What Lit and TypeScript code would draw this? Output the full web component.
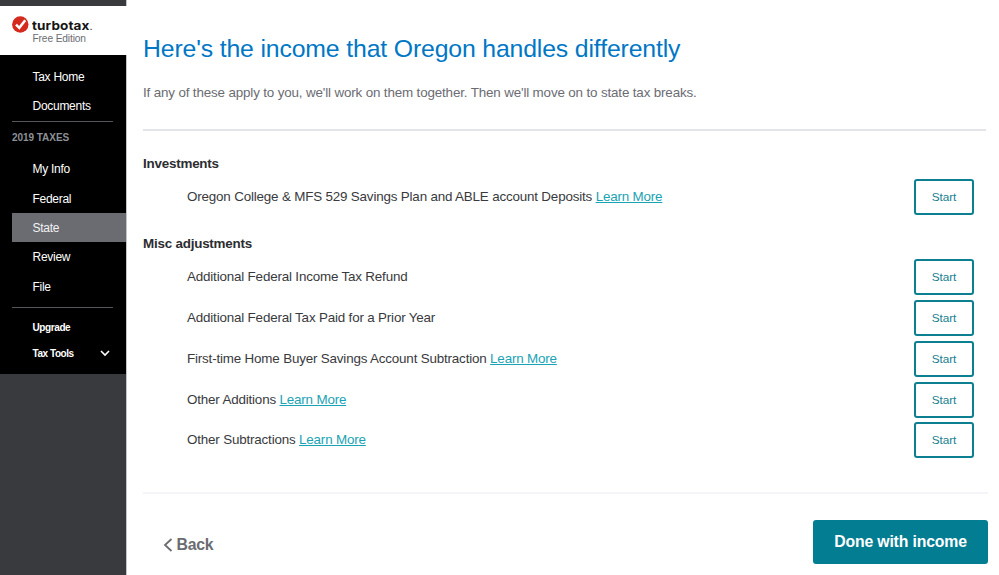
import { LitElement, html, css, nothing } from "lit";
import { customElement } from "lit/decorators.js";

interface Item { label: string; more?: boolean }
interface Section { title: string; items: Item[] }

const SECTIONS: Section[] = [
  {
    title: "Investments",
    items: [{ label: "Oregon College & MFS 529 Savings Plan and ABLE account Deposits", more: true }],
  },
  {
    title: "Misc adjustments",
    items: [
      { label: "Additional Federal Income Tax Refund" },
      { label: "Additional Federal Tax Paid for a Prior Year" },
      { label: "First-time Home Buyer Savings Account Subtraction", more: true },
      { label: "Other Additions", more: true },
      { label: "Other Subtractions", more: true },
    ],
  },
];

@customElement("tax-sidebar")
class TaxSidebar extends LitElement {
  static styles = css`
    :host { display: block; width: 126px; flex: none; background: #393a3d; border-right: 1px solid #c4c4c6; margin-right: -1px; box-sizing: content-box; }
    .brand { box-sizing: border-box; height: 49px; margin-top: 6px; padding: 9px 0 0 12px; background: #fff; display: flex; margin-right: -1px; }
    .brand svg { flex: none; width: 17px; height: 17px; margin-top: 1px; }
    .words { margin-left: 2.5px; }
    .name { font: 700 12.4px/16px Inter, sans-serif; letter-spacing: 0.1px; transform: scaleX(1.09); transform-origin: left; color: #151515; height: 17px; margin-top: 3px; display: flex; }
    .name span { font-weight: 400; font-size: 10px; }
    .edition { font-size: 10.2px; letter-spacing: -0.13px; line-height: 12px; color: #6b6c72; margin: -2px 0 0 1px; }
    .menu { background: #000; height: 319px; box-sizing: border-box; padding-top: 7px; color: #fff; }
    .link { height: 29.35px; line-height: 30.8px; padding-left: 20.5px; margin-left: 12px; font-size: 12px; letter-spacing: -0.28px; }
    .active { background: #6b6c72; color: #f2f2f2; }
    .rule { height: 1px; width: 101px; margin-left: 12px; background: #55565a; }
    .heading { margin: 9px 0 10.5px 12px; font-size: 10px; line-height: 13px; font-weight: 700; color: #8d9096; letter-spacing: -0.05px; }
    .small { display: flex; align-items: center; justify-content: space-between; height: 26px; padding: 0 16px 0 32.5px; font-size: 10px; font-weight: 700; letter-spacing: -0.45px; }
    .second { margin-top: 6px; }
    .upgrade { margin-top: 7px; letter-spacing: -0.4px; }
    .small svg { width: 10px; height: 8px; margin-top: -2px; }
  `;
  link(label: string, active = false) {
    return html`<div class="link ${active ? "active" : ""}">${label}</div>`;
  }
  render() {
    return html`
      <div class="brand">
        <svg viewBox="0 0 17 17"><circle cx="8.3" cy="8.5" r="8.2" fill="#d52b1e"/><path d="M4 8.6L7.3 11.8L13.2 4.2" fill="none" stroke="#fff" stroke-width="2.5"/></svg>
        <div class="words">
          <div class="name">turbotax<span>.</span></div>
          <div class="edition">Free Edition</div>
        </div>
      </div>
      <nav class="menu">
        ${this.link("Tax Home")}${this.link("Documents")}
        <div class="rule"></div>
        <div class="heading">2019 TAXES</div>
        ${this.link("My Info")}${this.link("Federal")}${this.link("State", true)}${this.link("Review")}${this.link("File")}
        <div class="rule second"></div>
        <div class="small upgrade">Upgrade</div>
        <div class="small">Tax Tools
          <svg viewBox="0 0 10 8"><path d="M1 2L5 6L9 2" fill="none" stroke="#fff" stroke-width="1.6"/></svg>
        </div>
      </nav>`;
  }
}

@customElement("app-root")
class AppRoot extends LitElement {
  static styles = css`
    :host { display: flex; height: 575px; overflow: hidden; background: #fff; font-family: "Liberation Sans", Arial, sans-serif; color: #393a3d; }
    main { flex: 1; padding: 0 11px 0 17px; display: flex; flex-direction: column; }
    h1 { margin: 32px 0 0; font-size: 24.8px; letter-spacing: -0.15px; line-height: 33px; font-weight: 400; color: #0077c5; white-space: nowrap; }
    .intro { margin: 19px 0 0; font-size: 13.4px; letter-spacing: -0.15px; line-height: 18px; color: #6b6c72; }
    .sections { margin: 27px 2px 0 0; border-top: 2px solid #e3e5e8; padding-top: 24px; }
    h2 { margin: 0; font-size: 13.4px; letter-spacing: -0.21px; line-height: 17px; font-weight: 700; color: #2c2d30; }
    .row { display: flex; align-items: center; justify-content: space-between; height: 36px; margin-bottom: 4.7px; padding: 0 12px 0 44px; font-size: 13.4px; letter-spacing: -0.175px; }
    .rows { padding-top: 7.3px; margin-bottom: 19.9px; }
    .label { margin-top: -1px; }
    a { color: #1aa3b4; text-decoration: underline; }
    .start { box-sizing: border-box; width: 60px; height: 36px; border: 2px solid #0c7f90; border-radius: 3px; font-size: 11.8px; letter-spacing: -0.05px; line-height: 33px; text-align: center; color: #16808f; }
    footer { border-top: 2px solid #f4f5f8; margin-top: 13.5px; padding-top: 26px; display: flex; justify-content: space-between; }
    .back { display: flex; align-items: center; height: 50px; margin-left: 20px; gap: 3.5px; font-weight: 700; font-size: 15.8px; letter-spacing: -0.25px; color: #6b6c72; }
    .back svg { width: 10px; height: 14px; }
    .done { height: 44px; width: 175px; border-radius: 3px; background: #037d91; color: #fff; font-weight: 700; font-size: 15.8px; letter-spacing: -0.16px; line-height: 43px; text-align: center; }
  `;
  render() {
    return html`
      <tax-sidebar></tax-sidebar>
      <main>
        <h1>Here's the income that Oregon handles differently</h1>
        <p class="intro">If any of these apply to you, we'll work on them together. Then we'll move on to state tax breaks.</p>
        <div class="sections">
          ${SECTIONS.map((s) => html`
            <h2>${s.title}</h2>
            <div class="rows">
              ${s.items.map((i) => html`
                <div class="row">
                  <div class="label">${i.label} ${i.more ? html`<a>Learn More</a>` : nothing}</div>
                  <div class="start">Start</div>
                </div>`)}
            </div>`)}
        </div>
        <footer>
          <div class="back"><svg viewBox="0 0 10 14"><path d="M8.5 1L2 7L8.5 13" fill="none" stroke="#6b6c72" stroke-width="1.8"/></svg>Back</div>
          <div class="done">Done with income</div>
        </footer>
      </main>`;
  }
}
